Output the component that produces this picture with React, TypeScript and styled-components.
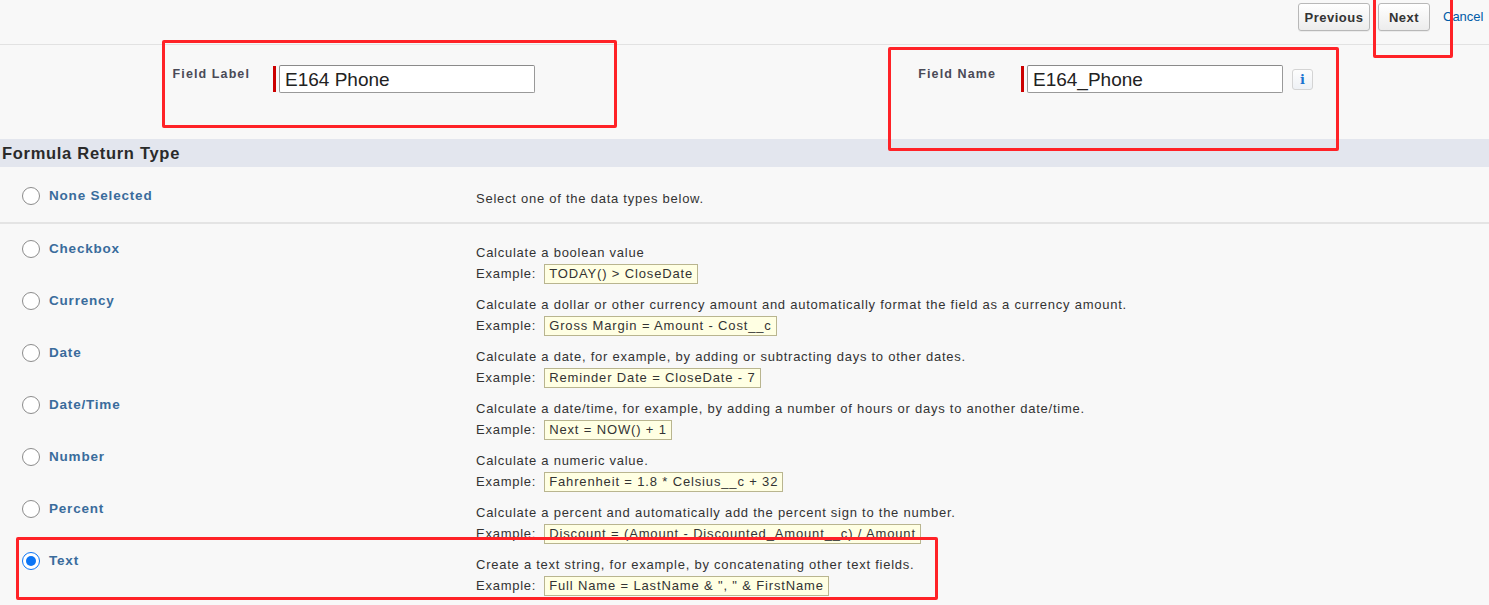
import React from "react";
import styled, { createGlobalStyle, css } from "styled-components";

const GlobalStyle = createGlobalStyle`
  html, body { margin: 0; padding: 0; }
  body {
    background: #f8f8f8;
    font-family: "Liberation Sans", Arial, sans-serif;
    color: #333;
    width: 1489px;
    height: 605px;
    overflow: hidden;
  }
`;

const Page = styled.div`
  position: relative;
  width: 1489px;
  height: 605px;
  overflow: hidden;
  background: #f8f8f8;
`;

const TopBar = styled.div`
  height: 45px;
  box-sizing: border-box;
  border-bottom: 1px solid #e2e2e2;
  display: flex;
  justify-content: flex-end;
  align-items: flex-start;
  padding-top: 3px;
  gap: 8px;
  margin-right: -30px;
`;

const Button = styled.button<{ $w: number }>`
  width: ${(p) => p.$w}px;
  height: 28px;
  border: 1px solid #b8b8b8;
  border-radius: 3px;
  background: linear-gradient(#ffffff, #ececec);
  font-family: "Liberation Sans", Arial, sans-serif;
  font-weight: bold;
  font-size: 13px;
  letter-spacing: 0.5px;
  color: #333;
  padding: 0;
  box-shadow: 0 1px 0 rgba(0, 0, 0, 0.05);
`;

const CancelLink = styled.a`
  font-size: 13px;
  color: #015ba7;
  line-height: 28px;
  margin-left: 5px;
  width: 76px;
`;

const Fields = styled.div`
  height: 94px;
  box-sizing: border-box;
  padding-top: 20px;
  display: grid;
  grid-template-columns: 262px 486px 260px 1fr;
  align-items: start;
`;

const FieldLabel = styled.div`
  text-align: right;
  padding-right: 12px;
  padding-top: 2px;
  font-size: 12.5px;
  font-weight: bold;
  color: #4a4a56;
  line-height: 14px;
  letter-spacing: 1.1px;
`;

const FieldData = styled.div<{ $pad: number }>`
  padding-left: ${(p) => p.$pad}px;
  display: flex;
  align-items: center;
`;

const RequiredBar = styled.span`
  width: 3px;
  height: 26px;
  background: #c00;
  margin-right: 3px;
`;

const TextInput = styled.div`
  width: 256px;
  height: 28px;
  box-sizing: border-box;
  border: 1px solid #999;
  border-top-color: #8a8a8a;
  border-radius: 2px;
  background: #fff;
  font-size: 19px;
  color: #222;
  line-height: 27px;
  padding-left: 5px;
`;

const InfoButton = styled.span`
  width: 21px;
  height: 21px;
  box-sizing: border-box;
  margin-left: 9px;
  border: 1px solid #d4d4d4;
  border-radius: 3px;
  background: linear-gradient(#fdfdfd, #eef1f5);
  display: flex;
  align-items: center;
  justify-content: center;
  font-family: "DejaVu Serif", "Liberation Serif", serif;
  font-weight: bold;
  font-size: 13px;
  color: #1a74d0;
`;

const SectionHeader = styled.div`
  height: 28px;
  background: #e3e6ee;
  display: flex;
  align-items: center;
  padding-left: 2px;
  font-size: 16.5px;
  font-weight: bold;
  color: #2a2a2a;
  letter-spacing: 0.7px;
`;

const Row = styled.div<{ $first?: boolean }>`
  display: grid;
  grid-template-columns: 476px 1fr;
  box-sizing: border-box;
  height: ${(p) => (p.$first ? "57px" : "52px")};
  padding-top: ${(p) => (p.$first ? "20px" : "16px")};
  ${(p) =>
    p.$first &&
    css`
      border-bottom: 2px solid #e4e4e4;
    `}
`;

const TypeCell = styled.label`
  display: flex;
  align-items: center;
  height: 18px;
  padding-left: 22px;
  gap: 9px;
`;

const Radio = styled.span<{ $checked?: boolean }>`
  width: 18px;
  height: 18px;
  box-sizing: border-box;
  border-radius: 50%;
  background: #fff;
  border: 1.5px solid ${(p) => (p.$checked ? "#0b75f5" : "#8c8c8c")};
  display: flex;
  align-items: center;
  justify-content: center;
  &::after {
    content: "";
    display: ${(p) => (p.$checked ? "block" : "none")};
    width: 10px;
    height: 10px;
    border-radius: 50%;
    background: #0b75f5;
  }
`;

const TypeName = styled.span`
  font-size: 13.5px;
  font-weight: bold;
  color: #3a6c9c;
  letter-spacing: 0.8px;
  margin-top: -1px;
`;

const Desc = styled.div<{ $first?: boolean }>`
  font-size: 13px;
  line-height: 21px;
  letter-spacing: 0.75px;
  color: #333;
  margin-top: ${(p) => (p.$first ? "1px" : "2px")};
`;

const ExampleLine = styled.div`
  display: flex;
  align-items: center;
  height: 21px;
`;

const ExampleBox = styled.span`
  margin-left: 8px;
  height: 20px;
  box-sizing: border-box;
  border: 1px solid #b9b58f;
  background: #ffffe3;
  padding: 0 4px;
  line-height: 18px;
  font-size: 13px;
  letter-spacing: 0.85px;
  color: #333;
`;

const Highlight = styled.div<{ $x: number; $y: number; $w: number; $h: number }>`
  position: absolute;
  left: ${(p) => p.$x}px;
  top: ${(p) => p.$y}px;
  width: ${(p) => p.$w}px;
  height: ${(p) => p.$h}px;
  box-sizing: border-box;
  border: 3px solid #ff2227;
  border-radius: 2px;
  pointer-events: none;
`;

type T = { name: string; desc: string; example: string; checked?: boolean };

const types: T[] = [
  { name: "Checkbox", desc: "Calculate a boolean value", example: "TODAY() > CloseDate" },
  {
    name: "Currency",
    desc: "Calculate a dollar or other currency amount and automatically format the field as a currency amount.",
    example: "Gross Margin = Amount - Cost__c",
  },
  {
    name: "Date",
    desc: "Calculate a date, for example, by adding or subtracting days to other dates.",
    example: "Reminder Date = CloseDate - 7",
  },
  {
    name: "Date/Time",
    desc: "Calculate a date/time, for example, by adding a number of hours or days to another date/time.",
    example: "Next = NOW() + 1",
  },
  { name: "Number", desc: "Calculate a numeric value.", example: "Fahrenheit = 1.8 * Celsius__c + 32" },
  {
    name: "Percent",
    desc: "Calculate a percent and automatically add the percent sign to the number.",
    example: "Discount = (Amount - Discounted_Amount__c) / Amount",
  },
  {
    name: "Text",
    desc: "Create a text string, for example, by concatenating other text fields.",
    example: 'Full Name = LastName & ", " & FirstName',
    checked: true,
  },
];

export default function App() {
  return (
    <Page>
      <GlobalStyle />
      <TopBar>
        <Button $w={72}>Previous</Button>
        <Button $w={52}>Next</Button>
        <CancelLink>Cancel</CancelLink>
      </TopBar>
      <Fields>
        <FieldLabel>Field Label</FieldLabel>
        <FieldData $pad={11}>
          <RequiredBar />
          <TextInput>E164 Phone</TextInput>
        </FieldData>
        <FieldLabel>Field Name</FieldLabel>
        <FieldData $pad={13}>
          <RequiredBar />
          <TextInput>E164_Phone</TextInput>
          <InfoButton>i</InfoButton>
        </FieldData>
      </Fields>
      <SectionHeader>Formula Return Type</SectionHeader>
      <Row $first>
        <TypeCell>
          <Radio />
          <TypeName>None Selected</TypeName>
        </TypeCell>
        <Desc $first>Select one of the data types below.</Desc>
      </Row>
      {types.map((t) => (
        <Row key={t.name}>
          <TypeCell>
            <Radio $checked={t.checked} />
            <TypeName>{t.name}</TypeName>
          </TypeCell>
          <Desc>
            {t.desc}
            <ExampleLine>
              Example:
              <ExampleBox>{t.example}</ExampleBox>
            </ExampleLine>
          </Desc>
        </Row>
      ))}
      <Highlight $x={162} $y={40} $w={455} $h={88} />
      <Highlight $x={888} $y={47} $w={451} $h={104} />
      <Highlight $x={1373} $y={-5} $w={80} $h={63} />
      <Highlight $x={16} $y={537} $w={922} $h={63} />
    </Page>
  );
}
